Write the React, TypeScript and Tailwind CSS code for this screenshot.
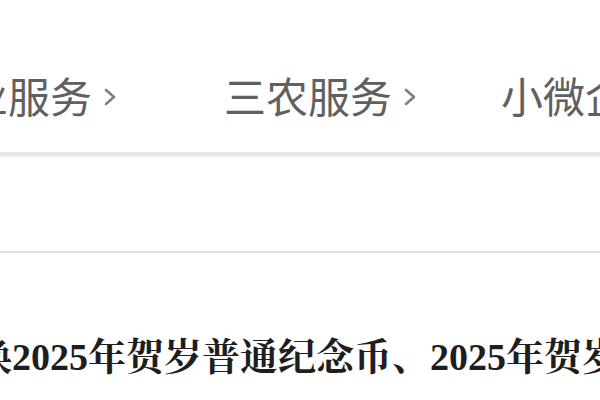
import React from "react";

const Chevron = () => (
  <svg width="14" height="18" viewBox="0 0 14 18" className="ml-[11px] mt-[4px] shrink-0">
    <path d="M3 2 L11 9 L3 16" fill="none" stroke="#808080" strokeWidth="2.6" strokeLinecap="round" strokeLinejoin="round" />
  </svg>
);

const NavItem = ({ label, className }: { label: string; className?: string }) => (
  <div className={`flex items-center shrink-0 ${className ?? ""}`}>
    <span className="whitespace-nowrap">{label}</span>
    <Chevron />
  </div>
);

export default function App() {
  return (
    <div className="w-[600px] h-[400px] overflow-hidden bg-white relative">
      <div
        className="flex items-center h-[42px] mt-[74px] text-[42px] leading-[42px] text-[#606060]"
        style={{ fontFamily: '"Noto Sans CJK SC", "Noto Sans", sans-serif' }}
      >
        <NavItem label="企业服务" className="ml-[-76px]" />
        <NavItem label="三农服务" className="ml-[107px]" />
        <NavItem label="小微企业" className="ml-[84px]" />
      </div>
      <div className="mt-[36px] h-[4px] bg-[#e6e6e6] shadow-[0_1px_2px_rgba(0,0,0,0.06)]" />
      <div className="mt-[95px] h-[2px] bg-[#e0e0e0]" />
      <div
        className="mt-[85px] ml-[-26px] whitespace-nowrap text-[38px] leading-[38px] font-bold text-[#1e1e1e]"
        style={{ fontFamily: '"Liberation Serif", "Noto Serif CJK SC", "Noto Sans CJK SC", serif' }}
      >
        换2025年贺岁普通纪念币、2025年贺岁
      </div>
    </div>
  );
}
